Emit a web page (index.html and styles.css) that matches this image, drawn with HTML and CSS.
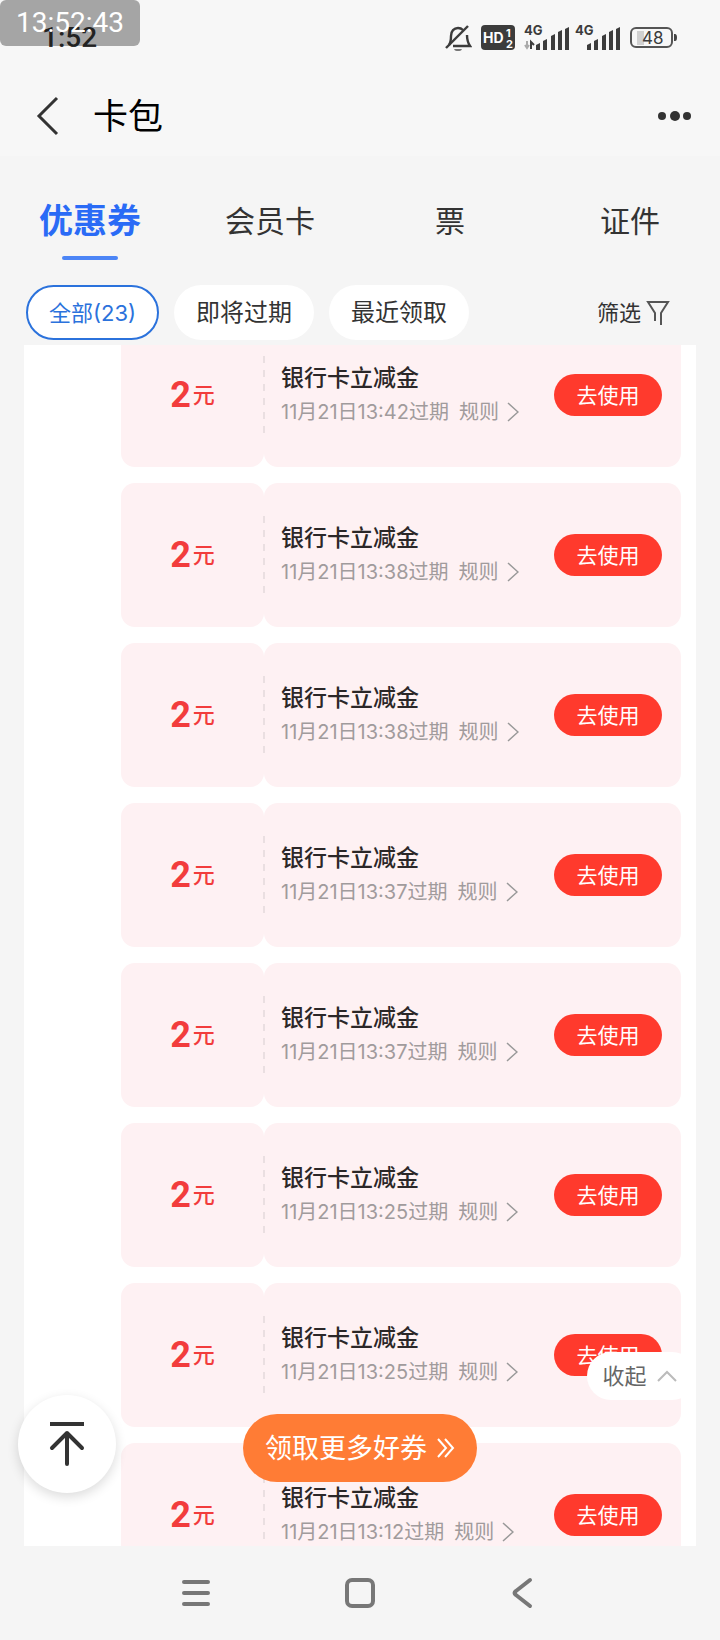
FILE: index.html
```html
<!DOCTYPE html>
<html lang="zh-CN">
<head>
    <meta charset="UTF-8">
    <meta name="viewport" content="width=device-width, initial-scale=1.0">
    <title>卡包</title>
    <link rel="stylesheet" href="styles.css">
</head>
<body>
<svg class="symbols" aria-hidden="true">
    <symbol id="arrow" viewBox="0 0 12 20"><path d="M1 1l10 9-10 9"/></symbol>
</svg>

<!-- 状态栏 -->
<div class="status">
    <span class="clock">1:52</span>
    <span class="stamp">13:52:43</span>
    <div class="status-icons">
        <svg width="28" height="30" viewBox="0 0 28 30" fill="none" stroke="#3c3c3c" stroke-width="2.4">
            <path d="M5 22c2-3 2-5 2-9 0-5 3-8 7-8 2 0 4 1 5 2M23 12c0 4 1 8 3 11H9"/>
            <path d="M2 25L24 3"/>
            <path d="M10 26h8c-1 2-2 2-4 2s-3 0-4-2z" fill="#777" stroke="none"/>
        </svg>
        <svg class="hd" width="34" height="26" viewBox="0 0 34 26">
            <rect width="34" height="25" rx="4" fill="#3c3c3c"/>
            <text x="2" y="18" font-size="14">HD</text>
            <text x="25" y="12" font-size="11">1</text>
            <text x="25" y="23" font-size="11">2</text>
        </svg>
        <svg class="signal" width="46" height="34" viewBox="0 -4 46 34">
            <text x="0" y="10" font-size="13">4G</text>
            <path d="M3 16v7M1 20l2 3 2-3" fill="none" stroke="#aaa" stroke-width="2"/>
            <path d="M7 24v-7l3 3" fill="none" stroke="#3c3c3c" stroke-width="2"/>
            <path d="M12 20l4-2v7h-4zM19 16l4-2v11h-4zM27 11l4-2v16h-4zM34 7l4-2v20h-4zM41 4l4-2v23h-4z"/>
        </svg>
        <svg class="signal" width="46" height="34" viewBox="0 -4 46 34">
            <text x="0" y="10" font-size="13">4G</text>
            <path d="M12 20l4-2v7h-4zM19 16l4-2v11h-4zM27 11l4-2v16h-4zM34 7l4-2v20h-4zM41 4l4-2v23h-4z"/>
        </svg>
        <svg class="battery" width="48" height="22" viewBox="0 0 48 22">
            <path d="M7 4h7v14H7z" fill="#d0d0d0"/>
            <rect x="1" y="1" width="41" height="19" rx="5" fill="none" stroke="#555" stroke-width="2"/>
            <path d="M44 7h1q2 0 2 3.500t-2 3.500h-1z" fill="#444"/>
            <text x="12" y="17" font-size="17">48</text>
        </svg>
    </div>
</div>

<!-- 标题 -->
<header class="header">
    <button class="icon-btn" aria-label="返回">
        <svg width="24" height="40" viewBox="0 0 24 40" fill="none" stroke="#333" stroke-width="3"><path d="M21 2L3 20l18 18"/></svg>
    </button>
    <h1>卡包</h1>
    <button class="icon-btn more" aria-label="更多">
        <svg width="34" height="12" viewBox="0 0 34 12" fill="#333"><circle cx="4" cy="6" r="4"/><circle cx="17" cy="6" r="5"/><circle cx="29" cy="6" r="4"/></svg>
    </button>
</header>

<nav class="tabs">
    <a class="tab active" href="#">优惠券</a>
    <a class="tab" href="#">会员卡</a>
    <a class="tab" href="#">票</a>
    <a class="tab" href="#">证件</a>
</nav>

<div class="filters">
    <button class="chip active">全部(23)</button>
    <button class="chip">即将过期</button>
    <button class="chip">最近领取</button>
    <button class="filter">筛选<svg width="24" height="26" viewBox="0 0 24 26" fill="none" stroke="#555" stroke-width="2"><path d="M9 21v-8L2 2h20l-7 11v12"/></svg></button>
</div>

<!-- 优惠券列表 -->
<main class="content">
    <div class="list">
        <div class="coupon">
            <div class="price"><b>2</b>元</div>
            <div class="detail">
                <div class="info">
                    <h2>银行卡立减金</h2>
                    <p>11月21日13:42过期<a href="#">规则<svg class="arrow"><use href="#arrow"/></svg></a></p>
                </div>
                <button class="use">去使用</button>
            </div>
        </div>
        <div class="coupon">
            <div class="price"><b>2</b>元</div>
            <div class="detail">
                <div class="info">
                    <h2>银行卡立减金</h2>
                    <p>11月21日13:38过期<a href="#">规则<svg class="arrow"><use href="#arrow"/></svg></a></p>
                </div>
                <button class="use">去使用</button>
            </div>
        </div>
        <div class="coupon">
            <div class="price"><b>2</b>元</div>
            <div class="detail">
                <div class="info">
                    <h2>银行卡立减金</h2>
                    <p>11月21日13:38过期<a href="#">规则<svg class="arrow"><use href="#arrow"/></svg></a></p>
                </div>
                <button class="use">去使用</button>
            </div>
        </div>
        <div class="coupon">
            <div class="price"><b>2</b>元</div>
            <div class="detail">
                <div class="info">
                    <h2>银行卡立减金</h2>
                    <p>11月21日13:37过期<a href="#">规则<svg class="arrow"><use href="#arrow"/></svg></a></p>
                </div>
                <button class="use">去使用</button>
            </div>
        </div>
        <div class="coupon">
            <div class="price"><b>2</b>元</div>
            <div class="detail">
                <div class="info">
                    <h2>银行卡立减金</h2>
                    <p>11月21日13:37过期<a href="#">规则<svg class="arrow"><use href="#arrow"/></svg></a></p>
                </div>
                <button class="use">去使用</button>
            </div>
        </div>
        <div class="coupon">
            <div class="price"><b>2</b>元</div>
            <div class="detail">
                <div class="info">
                    <h2>银行卡立减金</h2>
                    <p>11月21日13:25过期<a href="#">规则<svg class="arrow"><use href="#arrow"/></svg></a></p>
                </div>
                <button class="use">去使用</button>
            </div>
        </div>
        <div class="coupon">
            <div class="price"><b>2</b>元</div>
            <div class="detail">
                <div class="info">
                    <h2>银行卡立减金</h2>
                    <p>11月21日13:25过期<a href="#">规则<svg class="arrow"><use href="#arrow"/></svg></a></p>
                </div>
                <button class="use">去使用</button>
            </div>
        </div>
        <div class="coupon">
            <div class="price"><b>2</b>元</div>
            <div class="detail">
                <div class="info">
                    <h2>银行卡立减金</h2>
                    <p>11月21日13:12过期<a href="#">规则<svg class="arrow"><use href="#arrow"/></svg></a></p>
                </div>
                <button class="use">去使用</button>
            </div>
        </div>
    </div>

    <!-- 悬浮按钮 -->
    <button class="fold">收起<svg width="20" height="12" viewBox="0 0 20 12" fill="none" stroke="#bbb" stroke-width="2"><path d="M1 11l9-9 9 9"/></svg></button>
    <button class="to-top" aria-label="回到顶部">
        <svg width="36" height="46" viewBox="0 0 36 46" fill="none" stroke="#333" stroke-width="4"><path d="M1 3h34"/><path d="M18 43V12M3 27l15-15 15 15" stroke-linecap="round" stroke-linejoin="round"/></svg>
    </button>
    <button class="get-more">领取更多好券<svg width="18" height="20" viewBox="0 0 18 20" fill="none" stroke="#fff" stroke-width="2"><path d="M1 1l8 9-8 9M8 1l8 9-8 9"/></svg></button>
</main>

<!-- 系统导航 -->
<footer class="system-nav">
    <button class="icon-btn" aria-label="菜单">
        <svg width="32" height="32" viewBox="0 0 32 32"><path d="M4 5h24M4 16h24M4 27h24"/></svg>
    </button>
    <button class="icon-btn" aria-label="主页">
        <svg width="32" height="32" viewBox="0 0 32 32"><rect x="3" y="3" width="26" height="26" rx="5"/></svg>
    </button>
    <button class="icon-btn" aria-label="后退">
        <svg width="32" height="32" viewBox="0 0 32 32"><path d="M22 3L8 14q-3 2 0 4l14 11"/></svg>
    </button>
</footer>
</body>
</html>
```
FILE: styles.css
```css
*{margin: 0;padding: 0;box-sizing: border-box;}

body{
    display: flex;
    flex-direction: column;
    height: 100vh;
    background: #f5f5f5;
    color: #333;
    font-family: Inter, "Noto Sans CJK SC", sans-serif;
    line-height: 1;
    overflow: hidden;
}
button{
    border: 0;
    background: none;
    color: inherit;
    font-family: inherit;
    line-height: 1;
    cursor: pointer;
}
a{
    color: inherit;
    text-decoration: none;
}
svg{
    display: block;
    flex: none;
}
.symbols{
    position: absolute;
    width: 0;
    height: 0;
}
.icon-btn{
    display: flex;
    align-items: center;
    justify-content: center;
}

/* 状态栏 */
.status{
    position: relative;
    display: flex;
    align-items: center;
    justify-content: space-between;
    height: 76px;
    padding: 0 42px;
    background: #f7f7f7;
}
.clock,
.stamp{
    font-family: Roboto, sans-serif;
    font-size: 28px;
}
.clock{
    font-weight: 500;
    line-height: 32px;
}
.stamp{
    position: absolute;
    top: 0;
    left: 0;
    padding: 0 16px;
    border-radius: 6px;
    background: rgba(0, 0, 0, .33);
    color: #fff;
    line-height: 46px;
}
.status-icons{
    display: flex;
    align-items: center;
    gap: 9px;
}
.status-icons text{
    font-weight: 700;
    fill: #3c3c3c;
}
.status-icons .hd text{
    fill: #fff;
}
.status-icons .battery text{
    font-weight: 400;
}
.signal{
    fill: #3c3c3c;
}
.signal + .signal{
    margin-left: -4px;
}

/* 标题 */
.header{
    display: flex;
    align-items: center;
    height: 80px;
    padding: 0 28px 0 36px;
    background: #f7f7f7;
}
.header h1{
    margin-left: 33px;
    color: #000;
    font-size: 35px;
    font-weight: 400;
}
.header .more{
    margin-left: auto;
}

.tabs{
    display: grid;
    grid-template-columns: repeat(4, 1fr);
    height: 129px;
}
.tab{
    position: relative;
    text-align: center;
    font-size: 30px;
    line-height: 130px;
}
.tab.active{
    color: #2a6bf6;
    font-size: 34px;
    font-weight: 700;
}
.tab.active::after{
    content: "";
    position: absolute;
    top: 100px;
    left: 50%;
    width: 56px;
    height: 4px;
    margin-left: -28px;
    border-radius: 2px;
    background: #4c85f6;
}

.filters{
    display: flex;
    gap: 15px;
    padding: 0 50px 5px 26px;
}
.chip{
    height: 55px;
    padding: 0 22px;
    border-radius: 28px;
    background: #fff;
    font-size: 24px;
}
.chip.active{
    border: 2px solid #2b72dc;
    padding: 0 21px;
    color: #2b72dc;
    font-size: 22px;
}
.filter{
    display: flex;
    align-items: center;
    gap: 5px;
    margin-left: auto;
    font-size: 22px;
}

/* 列表 */
.content{
    position: relative;
    flex: 1;
    min-height: 0;
    margin: 0 24px;
    background: #fff;
}
.list{
    display: flex;
    flex-direction: column;
    justify-content: flex-end;
    gap: 16px;
    height: 100%;
    padding: 0 15px 0 97px;
    overflow: hidden;
}
.coupon{
    display: flex;
    flex: none;
    height: 144px;
}
.coupon:last-child{
    margin-bottom: -41px;
}
.price,
.detail{
    display: flex;
    align-items: center;
    border-radius: 14px;
    background: #fef1f3;
}
.price{
    justify-content: center;
    gap: 2px;
    width: 143px;
    color: #f23c3c;
    font-size: 22px;
    font-weight: 500;
}
.price b{
    font-family: Roboto, sans-serif;
    font-size: 36px;
}
.detail{
    position: relative;
    flex: 1;
    justify-content: space-between;
    padding: 0 19px 0 17px;
}
/* 虚线 */
.detail::before{
    content: "";
    position: absolute;
    top: 33px;
    left: -1px;
    width: 2px;
    height: 78px;
    background: repeating-linear-gradient(#eadfe1 0 7px, transparent 7px 14px);
}
.info h2{
    color: #2b2728;
    font-size: 23px;
    font-weight: 500;
    line-height: 34px;
}
.info p{
    display: flex;
    color: #a19b9c;
    font-size: 20px;
    line-height: 34px;
}
.info a{
    display: flex;
    align-items: center;
    gap: 8px;
    margin-left: 10px;
}
.arrow{
    width: 12px;
    height: 20px;
    fill: none;
    stroke: #999;
    stroke-width: 1.500;
}
.use{
    width: 108px;
    height: 42px;
    border-radius: 21px;
    background: #ff3a2d;
    color: #fff;
    font-size: 21px;
}

/* 悬浮按钮 */
.fold,
.to-top,
.get-more{
    position: absolute;
    display: flex;
    align-items: center;
    justify-content: center;
}
.fold{
    right: 0;
    bottom: 146px;
    gap: 10px;
    width: 109px;
    height: 48px;
    padding-right: 4px;
    border-radius: 24px;
    background: #fff;
    color: #666;
    font-size: 22px;
}
.to-top{
    left: -6px;
    bottom: 53px;
    width: 98px;
    height: 98px;
    border-radius: 50%;
    background: #fff;
    box-shadow: 0 4px 12px rgba(0, 0, 0, .14);
}
.get-more{
    left: 50%;
    bottom: 64px;
    gap: 10px;
    width: 234px;
    height: 68px;
    margin-left: -117px;
    border-radius: 34px;
    background: #ff7c35;
    color: #fff;
    font-size: 27px;
    white-space: nowrap;
}

/* 系统导航 */
.system-nav{
    display: flex;
    justify-content: center;
    gap: 132px;
    height: 94px;
}
.system-nav svg{
    fill: none;
    stroke: #777;
    stroke-width: 4;
    stroke-linecap: round;
}
```
